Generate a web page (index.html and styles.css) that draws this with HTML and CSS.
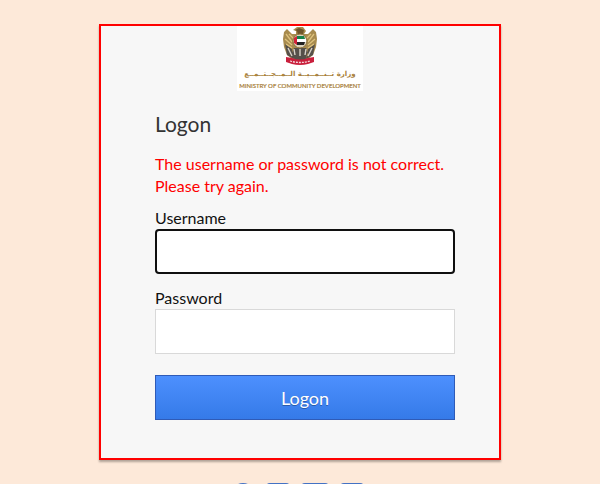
FILE: index.html
```html
<!DOCTYPE html>
<html lang="en">
<head>
<meta charset="utf-8">
<meta name="viewport" content="width=device-width, initial-scale=1">
<title>Logon</title>
<link rel="stylesheet" href="styles.css">
</head>
<body>
<main class="card">
  <header class="logo">
    <svg class="emblem" viewBox="0 0 36 40" aria-hidden="true">
      <path fill="#a88b4e" d="M11 4 15 1 21 1 24 5 22 8 26 8 31 3 34 6 35 13 34 21 31 29 26 33 10 33 5 29 2 21 1 13 2 6 5 3 10 8 14 8 14 5Z"/>
      <path fill="#6e552a" d="m13 4 4-2 5 2-1 4-5 1-1-4Z"/>
      <path fill="#55504a" d="m3 18 7 5 2 10-7-4Zm30 0-7 5-2 10 7-4ZM12 22h12l2 7-3 5H13l-3-5Z"/>
      <path fill="none" stroke="#dec27d" stroke-width="1.3" d="m4 8 6 8M7 8l5 5M3 13l7 6M4 18l6 4m22-14-6 8m3-8-5 5m9 0-7 6m6-1-6 4"/>
      <path fill="none" stroke="#d8d2c8" stroke-width="1.4" d="m6 22 4 8m2-7 1 6m5-6v7m6-7-1 6m7-7-4 8"/>
      <circle cx="18" cy="15" r="7" fill="#ddd4be" stroke="#8c7039"/>
      <path fill="#16834a" d="M15 10h7l1 3h-8z"/>
      <path fill="#fff" d="M15 13h9v3h-9z"/>
      <path fill="#222" d="M15 16h8l-1 3h-7z"/>
      <path fill="#d22339" d="M12 12l3-2v9l-3-2z"/>
      <path fill="#c91f3c" d="m4 31 6 1q8 3 16 0l6-1v5l-6 2q-8 2-16 0l-6-2Z"/>
      <path fill="none" stroke="#f5d7db" stroke-width="1.3" stroke-dasharray="2 1" d="M8 35q10 3 20 0"/>
    </svg>
    <span class="logo-ar" lang="ar" dir="rtl">وزارة تــنــمــيــة الــمــجــتــمــع</span>
    <span class="logo-en">MINISTRY OF COMMUNITY DEVELOPMENT</span>
  </header>
  <form class="form">
    <h1 class="title">Logon</h1>
    <p class="error" role="alert">The username or password is not correct. Please try again.</p>
    <div class="field">
      <label for="username">Username</label>
      <input class="focused" id="username" type="text">
    </div>
    <div class="field">
      <label for="password">Password</label>
      <input id="password" type="password">
    </div>
    <button class="submit" type="submit">Logon</button>
  </form>
</main>
<footer class="links">
  <a class="link round" href="#" aria-label="Help"></a>
  <a class="link" href="#" aria-label="Facebook"></a>
  <a class="link wide" href="#" aria-label="Video"></a>
  <a class="link" href="#" aria-label="Contact"></a>
</footer>
</body>
</html>
```
FILE: styles.css
```css
* { box-sizing: border-box; }
body {
  height: 100vh;
  margin: 0;
  padding-top: 24px;
  overflow: hidden;
  background: #fde9d9;
  color: #111;
  font: 16px/22px Lato, "Liberation Sans", sans-serif;
}
.card {
  max-width: 402px;
  margin: 0 auto;
  border: 2px solid #f00;
  background: #f7f7f7;
  box-shadow: 0 2px 2px rgba(0, 0, 0, .3);
}
.logo {
  display: flex;
  flex-direction: column;
  align-items: center;
  width: 126px;
  height: 65px;
  margin: 0 auto;
  background: #fff;
  color: #a8803a;
  white-space: nowrap;
}
.emblem { width: 36px; height: 40px; }
.logo-ar { font: bold 7px/16px "DejaVu Sans", sans-serif; }
.logo-en { font: 6px/8px Lato, sans-serif; -webkit-text-stroke: 0.2px; }
.form { padding: 18px 44px 38px 54px; }
.title {
  margin: 0 0 14px;
  color: #333;
  font-size: 21px;
  font-weight: 400;
  line-height: 30px;
}
.error { margin: 0 0 10px; color: #f00; }
.field { display: flex; flex-direction: column; margin-bottom: 13px; }
.field input {
  width: 100%;
  height: 45px;
  padding: 0 8px;
  border: 1px solid #d9d9d9;
  border-radius: 0;
  background: #fff;
  font: inherit;
}
.field .focused { border: 2px solid #101010; border-radius: 4px; }
.submit {
  display: block;
  width: 100%;
  height: 45px;
  margin-top: 21px;
  border: 1px solid #2f5bb7;
  background: linear-gradient(#4d90fe, #357ae8);
  color: #fff;
  font: 18px/22px Lato, sans-serif;
  text-shadow: 0 1px rgba(0, 0, 0, .3);
}
.links { display: flex; justify-content: center; gap: 11px; margin: 23px 6px 0 0; }
.link { width: 24px; height: 24px; border-radius: 4px; background: #4472c4; }
.round { border-radius: 50%; }
.wide { width: 28px; }
```
